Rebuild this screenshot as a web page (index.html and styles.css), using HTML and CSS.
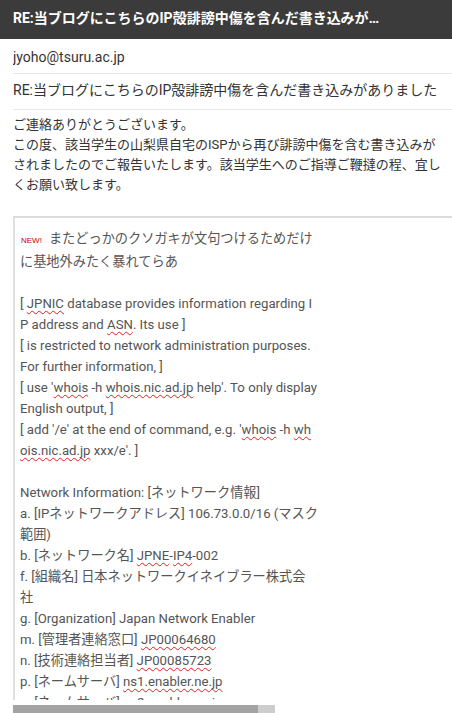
FILE: index.html
```html
<!DOCTYPE html>
<html lang="ja">
<head>
<meta charset="utf-8">
<title>RE:当ブログにこちらのIP殻誹謗中傷を含んだ書き込みがありました</title>
<link rel="stylesheet" href="styles.css">
</head>
<body>
<header class="topbar">
  <div class="topbar-title">RE:当ブログにこちらのIP殻誹謗中傷を含んだ書き込みがありました</div>
</header>
<div class="field field-from">jyoho@tsuru.ac.jp</div>
<div class="field field-subject">RE:当ブログにこちらのIP殻誹謗中傷を含んだ書き込みがありました</div>
<div class="message">
  <span class="line">ご連絡ありがとうございます。</span>
  <span class="line">この度、該当学生の山梨県自宅のISPから再び誹謗中傷を含む書き込みが</span>
  <span class="line">されましたのでご報告いたします。該当学生へのご指導ご鞭撻の程、宜し</span>
  <span class="line">くお願い致します。</span>
</div>
<div class="quote">
  <div class="quote-inner">
    <span class="line"><span class="new">NEW!</span>またどっかのクソガキが文句つけるためだけ</span>
    <span class="line">に基地外みたく暴れてらあ</span>
    <span class="line">&nbsp;</span>
    <span class="line">[ <span class="sp">JPNIC</span> database provides information regarding I</span>
    <span class="line">P address and <span class="sp">ASN</span>. Its use ]</span>
    <span class="line">[ is restricted to network administration purposes.</span>
    <span class="line">For further information, ]</span>
    <span class="line">[ use '<span class="sp">whois</span> -h <span class="sp">whois.nic.ad.jp</span> help'. To only display</span>
    <span class="line">English output, ]</span>
    <span class="line">[ add '/e' at the end of command, e.g. '<span class="sp">whois</span> -h <span class="sp">wh</span></span>
    <span class="line"><span class="sp">ois.nic.ad.jp</span> xxx/e'. ]</span>
    <span class="line">&nbsp;</span>
    <span class="line">Network Information: [ネットワーク情報]</span>
    <span class="line">a. [IPネットワークアドレス] 106.73.0.0/16 (マスク</span>
    <span class="line">範囲)</span>
    <span class="line">b. [ネットワーク名] <span class="sp">JPNE</span>-<span class="sp">IP4</span>-002</span>
    <span class="line">f. [組織名] 日本ネットワークイネイブラー株式会</span>
    <span class="line">社</span>
    <span class="line">g. [Organization] Japan Network Enabler</span>
    <span class="line">m. [管理者連絡窓口] <span class="sp">JP00064680</span></span>
    <span class="line">n. [技術連絡担当者] <span class="sp">JP00085723</span></span>
    <span class="line">p. [ネームサーバ] <span class="sp">ns1.enabler.ne.jp</span></span>
    <span class="line">p. [ネームサーバ] <span class="sp">ns2.enabler.ne.jp</span></span>
  </div>
</div>
<div class="hscroll"><div class="hscroll-thumb"></div></div>
</body>
</html>
```

FILE: styles.css
```css
html, body {
  margin: 0;
  padding: 0;
  background: #ffffff;
}
body {
  width: 452px;
  height: 713px;
  overflow: hidden;
  font-family: "Roboto", "Noto Sans CJK JP", sans-serif;
  color: #333333;
}
.line {
  display: block;
  white-space: nowrap;
}
.topbar {
  height: 39px;
  background: #3b3b3b;
  box-sizing: border-box;
  padding: 0 66px 4px 13px;
  display: flex;
  align-items: center;
}
.topbar-title {
  color: #ffffff;
  font-weight: bold;
  font-size: 14px;
  line-height: 20px;
  white-space: nowrap;
  overflow: hidden;
  text-overflow: ellipsis;
  min-width: 0;
}
.field {
  margin-left: 13px;
  border-bottom: 1px solid #e6e6e6;
  font-size: 14px;
  color: #333333;
  white-space: nowrap;
  overflow: hidden;
}
.field-from {
  height: 34px;
  line-height: 36px;
}
.field-subject {
  height: 35px;
  line-height: 33px;
}
.message {
  padding: 5px 8px 0 13px;
  font-size: 13px;
  line-height: 20px;
  color: #333333;
  margin-bottom: 21px;
}
.quote {
  margin-left: 13px;
  height: 484px;
  box-sizing: border-box;
  border-top: 2px solid #dcdcdc;
  border-left: 2px solid #e0e0e0;
  overflow: hidden;
}
.quote-inner {
  padding: 10px 0 0 5px;
  font-size: 13.2px;
  line-height: 21px;
  color: #555555;
}
.new {
  color: #cc0000;
  font-family: "Liberation Sans", sans-serif;
  font-size: 8px;
  margin-left: 1px;
  margin-right: 7px;
}
.sp {
  text-decoration: underline wavy #e02020;
  text-decoration-thickness: 1px;
  text-underline-offset: 2px;
  text-decoration-skip-ink: none;
}
.hscroll {
  margin: 5px 0 0 13px;
  width: 262px;
  height: 8px;
  background: #cdcdcd;
}
.hscroll-thumb {
  width: 245px;
  height: 8px;
  background: #a3a3a3;
}
```
